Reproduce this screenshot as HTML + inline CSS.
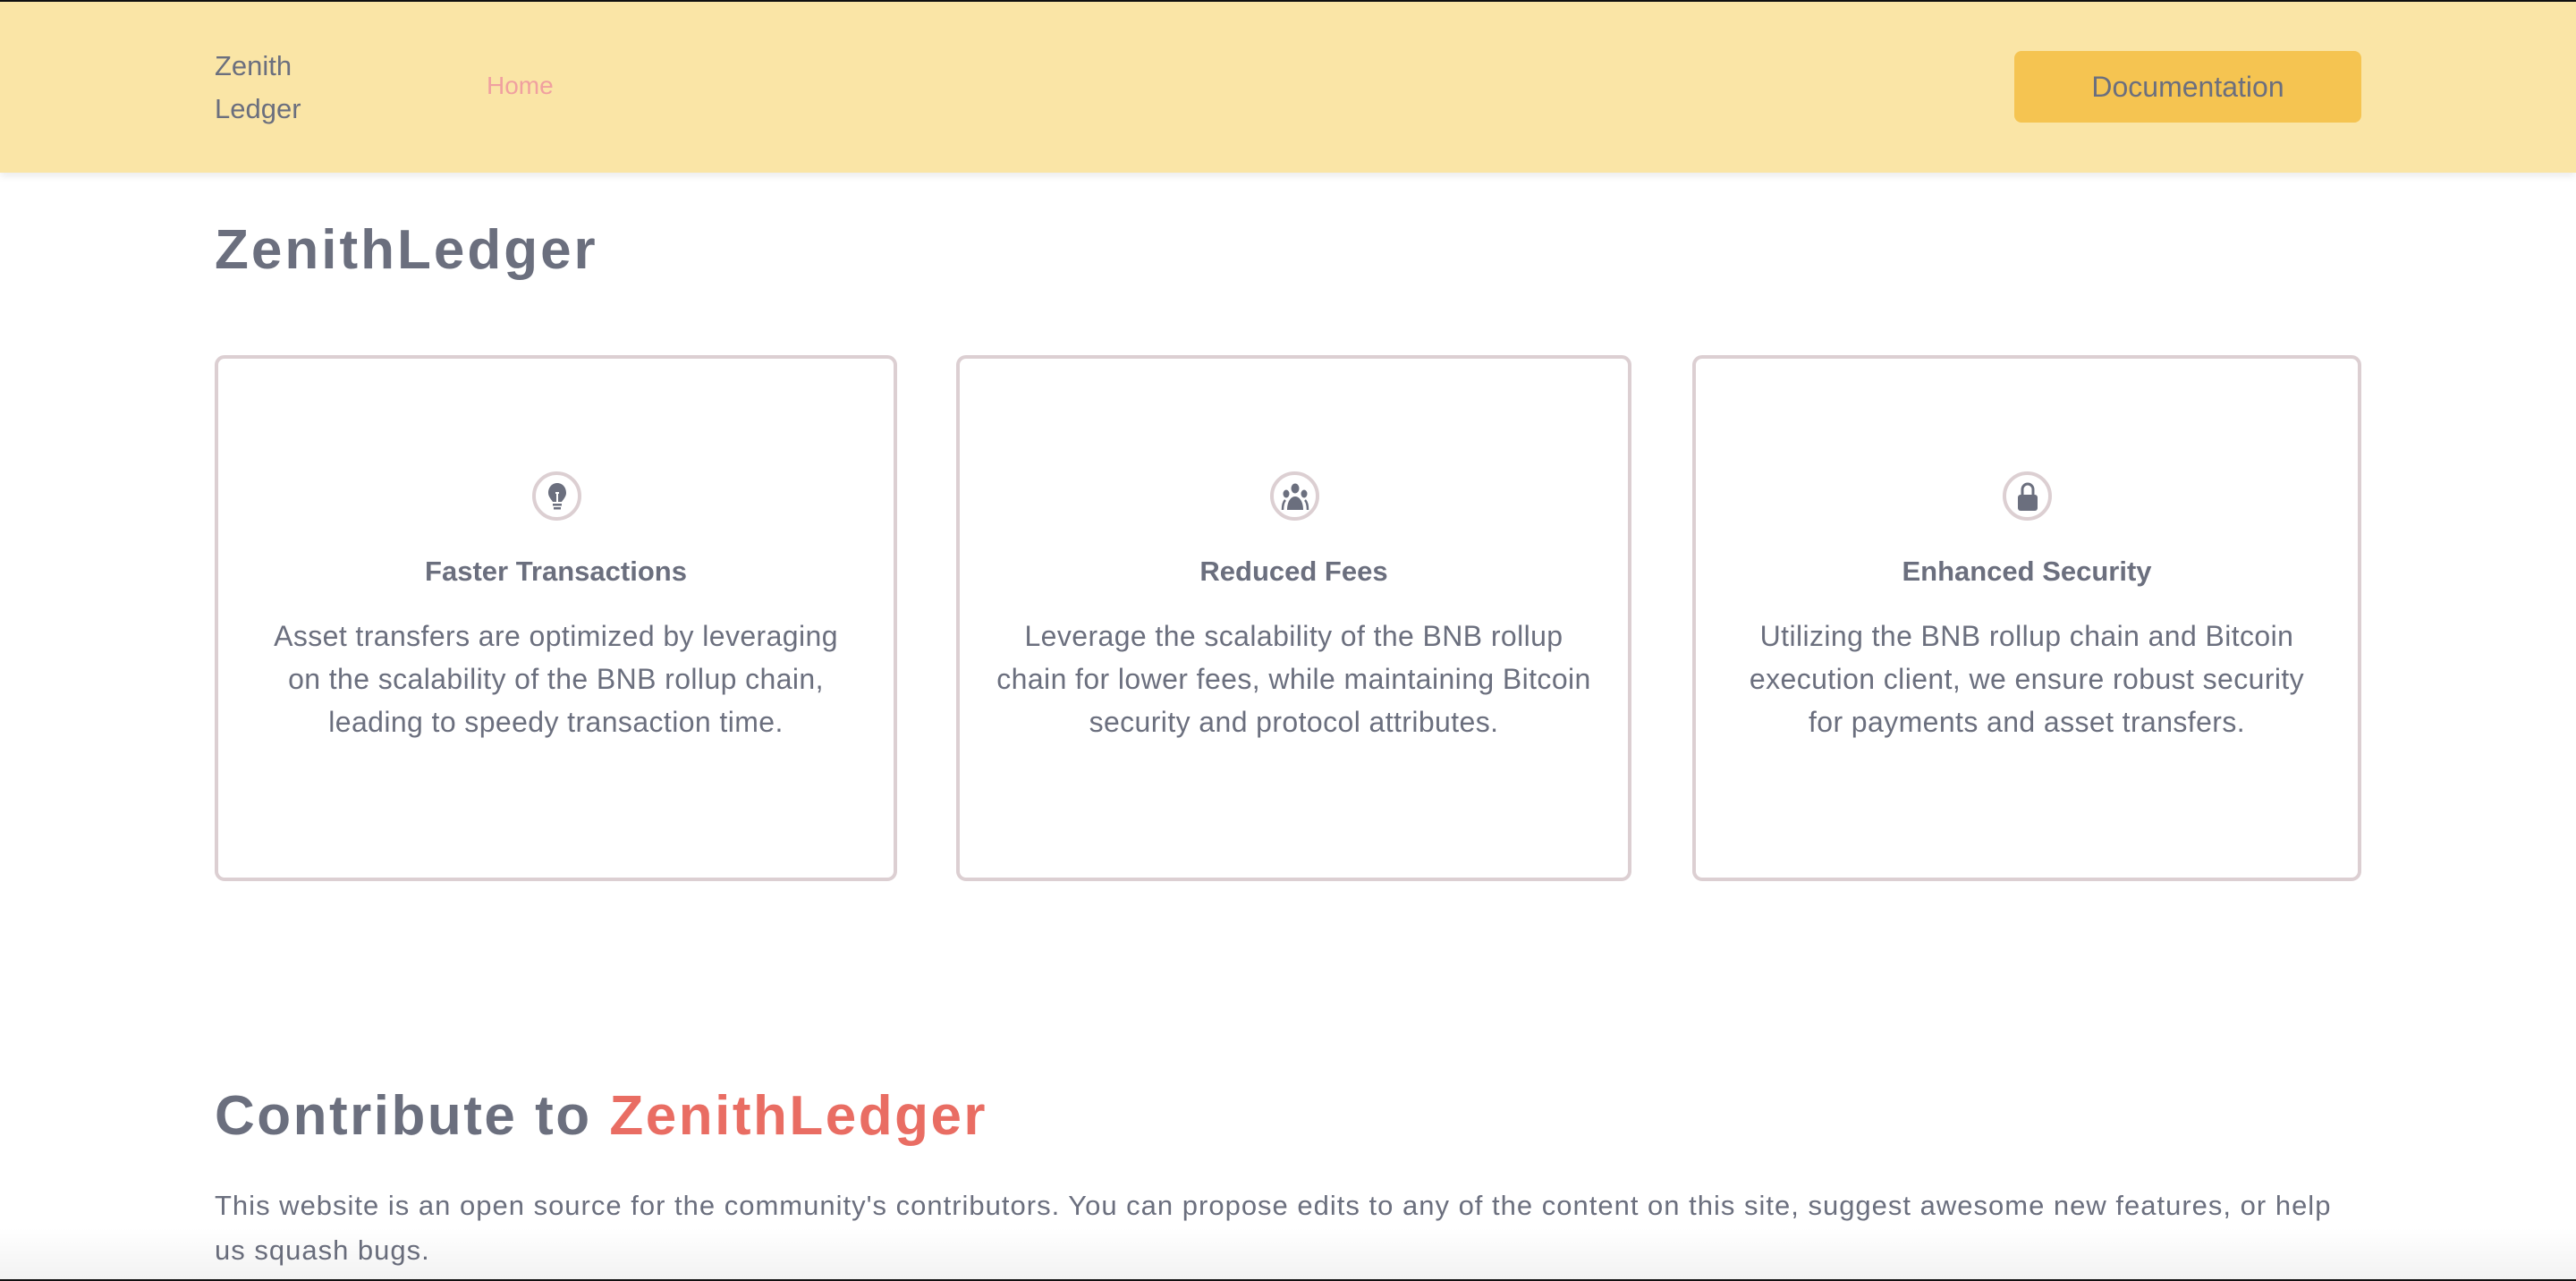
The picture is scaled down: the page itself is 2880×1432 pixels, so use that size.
<!DOCTYPE html>
<html><head><meta charset="utf-8"><style>
*{margin:0;padding:0;box-sizing:border-box}
html,body{width:2880px;height:1432px;overflow:hidden;background:#fff;font-family:"Liberation Sans",sans-serif;color:#6b6f7e}
.top{position:absolute;left:0;top:0;width:2880px;height:2px;background:#111}
header{position:absolute;left:0;top:2px;width:2880px;height:191px;background:#fae5a6;box-shadow:0 4px 8px rgba(0,0,0,0.08)}
.logo{position:absolute;left:240px;top:48px;font-size:31px;line-height:48px;color:#6b6f7e}
.home{position:absolute;left:544px;top:78px;font-size:28px;color:#f0a0a0}
.btn{position:absolute;left:2252px;top:55px;width:388px;height:80px;background:#f5c451;border-radius:8px;font-size:32px;line-height:80px;text-align:center;color:#6b6f7e}
h1{position:absolute;left:240px;top:244px;font-size:62px;font-weight:bold;color:#6b6f7e;letter-spacing:3px}
.card{position:absolute;top:397px;height:588px;border:4px solid #dccfd2;border-radius:11px;text-align:center}
.ic{position:absolute;left:50%;top:126px;width:55px;height:55px;margin-left:-27px;border:4px solid #dccfd2;border-radius:50%;background:#fff}
.ic svg{position:absolute;left:6px;top:6px;width:36px;height:36px}
.card h3{position:absolute;left:0;right:0;top:220px;font-size:31px;font-weight:bold}
.card p{position:absolute;left:0;right:0;top:286px;font-size:32px;line-height:48px;letter-spacing:0.4px;white-space:nowrap}
h2{position:absolute;left:240px;top:1212px;font-size:62px;font-weight:bold;color:#6b6f7e;letter-spacing:2.5px}
h2 span{color:#e96d63}
.para{position:absolute;left:240px;top:1323px;width:2500px;font-size:31px;line-height:50px;letter-spacing:1px;white-space:nowrap}
.fade{position:absolute;left:0;bottom:0;width:2880px;height:60px;background:linear-gradient(rgba(0,0,0,0),rgba(0,0,0,0.05))}
.bot{position:absolute;left:0;bottom:0;width:2880px;height:2px;background:#111}
</style></head><body>
<div class="top"></div>
<header>
<div class="logo">Zenith<br>Ledger</div>
<div class="home">Home</div>
<div class="btn">Documentation</div>
</header>
<h1>ZenithLedger</h1>

<div class="card" style="left:240px;width:763px">
<div class="ic"><svg viewBox="0 0 36 36"><path d="M18 3c-6 0-10 5-10 11 0 4 3 7 5 10h10c2-3 5-6 5-10 0-6-4-11-10-11z" fill="#6b6f7e"/><path d="M16 14h4M18 14v10" stroke="#fff" stroke-width="2"/><rect x="13" y="26" width="10" height="2.5" fill="#6b6f7e"/><rect x="14" y="30" width="8" height="2.5" fill="#6b6f7e"/></svg></div>
<h3>Faster Transactions</h3>
<p>Asset transfers are optimized by leveraging<br>on the scalability of the BNB rollup chain,<br>leading to speedy transaction time.</p>
</div>

<div class="card" style="left:1069px;width:755px">
<div class="ic"><svg viewBox="0 0 36 36"><ellipse cx="18" cy="9" rx="4.5" ry="5.5" fill="#6b6f7e"/><ellipse cx="8" cy="15" rx="3.5" ry="4.5" fill="#6b6f7e"/><ellipse cx="28" cy="15" rx="3.5" ry="4.5" fill="#6b6f7e"/><path d="M9 33c0-9 4-15 9-15s9 6 9 15z" fill="#6b6f7e"/><path d="M4 33c0-5 1-9 3-11M32 33c0-5-1-9-3-11" stroke="#6b6f7e" stroke-width="2.5" fill="none"/></svg></div>
<h3>Reduced Fees</h3>
<p>Leverage the scalability of the BNB rollup<br>chain for lower fees, while maintaining Bitcoin<br>security and protocol attributes.</p>
</div>

<div class="card" style="left:1892px;width:748px">
<div class="ic"><svg viewBox="0 0 36 36"><path d="M12 17v-7a6 6 0 0 1 12 0v7" stroke="#6b6f7e" stroke-width="3" fill="none"/><rect x="7" y="16" width="22" height="18" rx="3" fill="#6b6f7e"/></svg></div>
<h3>Enhanced Security</h3>
<p>Utilizing the BNB rollup chain and Bitcoin<br>execution client, we ensure robust security<br>for payments and asset transfers.</p>
</div>

<h2>Contribute to <span>ZenithLedger</span></h2>
<div class="para">This website is an open source for the community's contributors. You can propose edits to any of the content on this site, suggest awesome new features, or help<br>us squash bugs.</div>
<div class="fade"></div>
<div class="bot"></div>
</body></html>
